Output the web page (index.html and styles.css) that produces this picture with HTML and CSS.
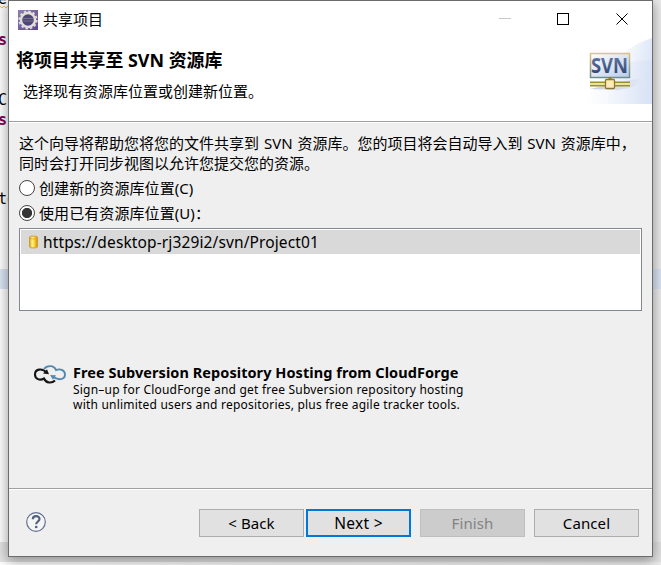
FILE: index.html
```html
<!DOCTYPE html>
<html lang="zh-CN">
<head>
<meta charset="utf-8">
<title>共享项目</title>
<link rel="stylesheet" href="styles.css">
</head>
<body>
<div class="backdrop" aria-hidden="true">
  <div class="current-line"></div>
  <div class="editor-edge"></div>
  <span class="code code-top">e</span>
  <svg class="squiggle" viewBox="0 0 8 4" fill="none"><path d="M0 1l2 2 2-2 2 2 2-2" stroke="#e7c647"/></svg>
  <span class="code keyword code-a">s</span>
  <span class="code code-b">C</span>
  <span class="code keyword code-c">s</span>
  <span class="code code-d">to</span>
</div>
<main class="dialog">
  <header class="header">
    <div class="titlebar">
      <svg class="app-icon" viewBox="0 0 20 20">
        <defs><linearGradient id="app" x2="1" y2="1"><stop stop-color="#8d80ad"/><stop offset="1" stop-color="#5b4590"/></linearGradient></defs>
        <path fill="url(#app)" d="M0 0h20v20H0z"/>
        <circle cx="10" cy="10" r="8.6" fill="none" stroke="#ded9d7" stroke-width="2" stroke-dasharray="2.5 2"/>
        <circle cx="10" cy="10" r="7" fill="#4d4672" stroke="#e3dfdd" stroke-width="2.400"/>
        <path d="M5 8.5h10M4.7 11h10.6" stroke="#77708f"/>
      </svg>
      <span class="title">共享项目</span>
      <svg class="window-controls" viewBox="0 0 126 14" shape-rendering="crispEdges">
        <path d="M0 6.5h12" stroke="#c8c8c8"/>
        <path d="M58.500 1.500h11v11h-11z" fill="none" stroke="#000"/>
        <path d="M117.500 1.500l11 11M128.500 1.500l-11 11" stroke="#000" shape-rendering="auto"/>
      </svg>
    </div>
    <div class="banner">
      <div class="banner-text">
        <h1>将项目共享至 SVN 资源库</h1>
        <p>选择现有资源库位置或创建新位置。</p>
      </div>
      <svg class="banner-art" viewBox="0 0 75 66">
        <defs>
          <linearGradient id="sky" x2="1" y2=".3"><stop stop-color="#fff"/><stop offset=".6" stop-color="#f0f4fc"/><stop offset="1" stop-color="#dde6f7"/></linearGradient>
          <linearGradient id="arc" x2="1"><stop stop-color="#fff"/><stop offset="1" stop-color="#d7e1f5"/></linearGradient>
          <linearGradient id="panel" x2="1" y2="1"><stop stop-color="#fff"/><stop offset="1" stop-color="#b9cbea"/></linearGradient>
          <linearGradient id="frame" x2="0" y2="1"><stop stop-color="#e2c27e"/><stop offset="1" stop-color="#6b8d8c"/></linearGradient>
          <linearGradient id="letters" x2="0" y2="1"><stop stop-color="#7388b0"/><stop offset="1" stop-color="#213766"/></linearGradient>
          <linearGradient id="shade" x2="1"><stop stop-color="#b4b6cc"/><stop offset="1" stop-color="#e4e9f7"/></linearGradient>
        </defs>
        <path d="M31 66V31Q49 8 75 0v66z" fill="url(#sky)"/>
        <path d="M8 66Q26 22 75 22v44z" fill="url(#arc)" opacity=".65"/>
        <path d="M13 51l40-9q17-3 14 1-8 7-26 9z" fill="url(#shade)" opacity=".65"/>
        <path d="M13.500 15.500h39v24h-39z" fill="url(#panel)" stroke="url(#frame)" stroke-width="1.500"/>
        <text x="14" y="35" textLength="37" lengthAdjust="spacingAndGlyphs" class="svn" fill="url(#letters)">SVN</text>
        <path d="M33 39v3" stroke="#91802a" stroke-width="3"/>
        <path d="M13 46h40" stroke="#999129" stroke-width="5"/><path d="M13 46h40" stroke="#e8e4a0" stroke-width="2"/>
        <rect x="28.500" y="41.500" width="9" height="9" rx="1" fill="#ffebb8" stroke="#8b7929" stroke-width="1.300"/>
      </svg>
    </div>
  </header>
  <section class="content">
    <p class="intro">这个向导将帮助您将您的文件共享到 SVN 资源库。您的项目将会自动导入到 SVN 资源库中，<br>同时会打开同步视图以允许您提交您的资源。</p>
    <div class="option"><i class="radio"></i><span>创建新的资源库位置(C)</span></div>
    <div class="option"><i class="radio selected"></i><span>使用已有资源库位置(U)：</span></div>
    <div class="repo-list">
      <div class="repo">
        <svg class="database" viewBox="0 0 10 14"><defs><linearGradient id="gold" x2="1"><stop stop-color="#d99a18"/><stop offset=".35" stop-color="#fff58e"/><stop offset=".65" stop-color="#ffcf24"/><stop offset="1" stop-color="#c58311"/></linearGradient></defs><rect x=".5" y=".5" width="9" height="13" rx="2" fill="url(#gold)" stroke="#d19a28"/><path d="M1 3q4 1.500 8 0" fill="none" stroke="#e3a91e"/></svg>
        <span class="url">https://desktop-rj329i2/svn/Project01</span>
      </div>
    </div>
    <div class="promo">
      <svg class="cloud" viewBox="0 0 32 20" fill="none">
        <path d="M10 4C13 0 20 0 22 5c5-2 9 1 9 4.500 0 5-7 6.500-12 2" stroke="#5289b2" stroke-width="1.900"/>
        <path d="M16 10l6 .3-3 4.500z" fill="#5289b2"/>
        <path d="M13 8C8 2.500 1 4 1 9.500 1 14 6 16 10 13.500c2 5 8 5 11 2" stroke="#161616" stroke-width="2.100"/>
        <path d="M9 8.500l6 .8-2-5z" fill="#161616"/>
      </svg>
      <div class="promo-text">
        <strong>Free Subversion Repository Hosting from CloudForge</strong>
        <span>Sign–up for CloudForge and get free Subversion repository hosting</span>
        <span>with unlimited users and repositories, plus free agile tracker tools.</span>
      </div>
    </div>
  </section>
  <footer class="footer">
    <svg class="help" viewBox="0 0 20 20" fill="none"><circle cx="10" cy="10" r="9.300" fill="#f5f5f6" stroke="#60708f" stroke-width="1.200"/><path d="M6.800 7.300C6.800 3.200 13.500 3.200 13.500 7c0 2.400-3.300 2.600-3.300 5.300" stroke="#50617f" stroke-width="2.200"/><circle cx="10.200" cy="15" r="1.350" fill="#50617f"/></svg>
    <div class="actions">
      <button>&lt; Back</button><button class="primary">Next &gt;</button><button class="finish" disabled>Finish</button><button class="cancel">Cancel</button>
    </div>
  </footer>
</main>
</body>
</html>
```

FILE: styles.css
```css
* { box-sizing: border-box; }
body { margin: 0; width: 661px; height: 565px; overflow: hidden; background: #fff; color: #000; font: 15px "Noto Sans", "Noto Sans CJK SC", sans-serif; position: relative; }
h1, p { margin: 0; font-weight: 400; }
svg { display: block; flex: none; }
.backdrop { position: absolute; inset: 0; background: linear-gradient(to right, #fff 0 8px, #ededed 653px); }
.current-line { position: absolute; top: 269px; width: 100%; height: 20px; background: #dce6f6; }
.editor-edge { position: absolute; top: 542px; width: 100%; height: 20px; background: #e4e4e4; }
.code { position: absolute; left: -2px; font: 15px/16px "DejaVu Sans Mono", monospace; }
.squiggle { position: absolute; left: 0; top: 5px; width: 8px; height: 4px; }
.keyword { color: #7f0055; font-weight: 700; }
.code-top { top: -9px; }
.code-a { top: 32px; }
.code-b { top: 92px; }
.code-c { top: 112px; }
.code-d { top: 191px; }
.dialog { position: relative; width: 645px; height: 557px; margin-left: 8px; border: 1px solid #6c6c6c; background: #efefef; display: flex; flex-direction: column; box-shadow: 0 3px 12px 1px rgba(0,0,0,.38); }
.header { height: 121px; background: #fff; border-bottom: 1px solid #a0a0a0; box-shadow: 0 1px #fff; }
.titlebar { height: 37px; display: flex; align-items: center; padding-left: 9px; }
.app-icon { width: 20px; height: 20px; }
.title { margin-left: 5px; margin-top: -2px; line-height: 20px; }
.window-controls { width: 126px; height: 14px; margin: -2px 27px 0 auto; overflow: visible; }
.banner { height: 83px; display: flex; justify-content: space-between; }
.banner-text { padding: 10px 0 0 7px; }
.banner h1 { font-size: 17.900px; line-height: 25px; font-weight: 700; white-space: nowrap; }
.banner p { margin: 8px 0 0 7px; line-height: 21px; }
.banner-art { width: 75px; height: 66px; }
.svn { font: 700 21px "Noto Sans", sans-serif; }
.content { flex: 1; padding: 11px 10px 0; }
.intro { margin-bottom: 2px; line-height: 20px; word-spacing: 1px; white-space: nowrap; }
.option { height: 25px; display: flex; align-items: center; line-height: 20px; letter-spacing: .08px; }
.radio { width: 16px; height: 16px; margin-right: 4px; border: 1px solid #444; border-radius: 50%; background: #fff; }
.selected { background: radial-gradient(circle, #333 0 4.7px, #fff 5.5px); }
.repo-list { width: 623px; height: 83px; margin-top: 3px; padding: 1px; border: 1px solid #828790; background: #fff; }
.repo { height: 24px; background: #d9d9d9; display: flex; align-items: center; padding-left: 8px; }
.database { width: 9px; height: 14px; margin-right: 5px; }
.url { font-size: 15.500px; line-height: 22px; letter-spacing: .12px; }
.promo { margin: 52px 0 0 15px; display: flex; }
.cloud { width: 32px; height: 20px; margin-top: 2px; }
.promo-text { margin-left: 7px; display: flex; flex-direction: column; font-size: 12px; line-height: 15px; letter-spacing: .21px; white-space: nowrap; }
.promo strong { font-size: 14.500px; line-height: 19px; letter-spacing: .06px; }
.footer { height: 68px; border-top: 1px solid #a0a0a0; box-shadow: inset 0 1px #fff; padding: 20px 13px 0 17px; display: flex; justify-content: space-between; }
.help { width: 20px; height: 20px; margin-top: 3px; }
.actions { display: flex; }
button { width: 105px; height: 28px; padding: 0; background: #e1e1e1; border: 1px solid #adadad; color: #000; font: 15px "Noto Sans", "Noto Sans CJK SC", sans-serif; line-height: 26px; letter-spacing: .1px; }
.primary { border: 2px solid #0078d7; margin-left: 2px; line-height: 24px; font-size: 15.500px; letter-spacing: .3px; }
.finish { margin-left: 9px; background: #ccc; border-color: #bfbfbf; color: #838383; }
.cancel { margin-left: 9px; }
```
